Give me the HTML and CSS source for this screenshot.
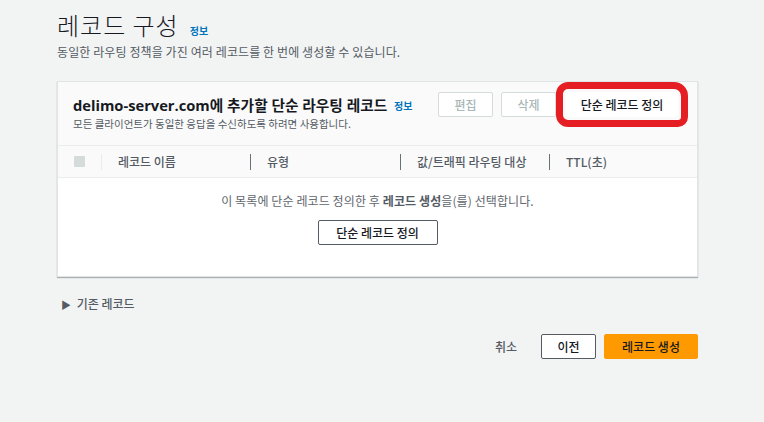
FILE: index.html
```html
<!DOCTYPE html>
<html>
<head>
	<meta charset="UTF-8">
	<title>레코드 구성</title>
	<link rel="stylesheet" href="styles.css">
</head>
<body>
	<div class="page">
		<div class="head">
			<h1 class="title">레코드 구성 <a class="info">정보</a></h1>
			<p class="desc">동일한 라우팅 정책을 가진 여러 레코드를 한 번에 생성할 수 있습니다.</p>
		</div>

		<div class="card">
			<div class="card-head">
				<div class="card-text">
					<h2 class="card-title">delimo-server.com에 추가할 단순 라우팅 레코드 <a class="info">정보</a></h2>
					<p class="card-desc">모든 클라이언트가 동일한 응답을 수신하도록 하려면 사용합니다.</p>
				</div>
				<div class="actions">
					<button class="btn off">편집</button>
					<button class="btn off">삭제</button>
					<span class="mark"><button class="btn">단순 레코드 정의</button></span>
				</div>
			</div>
			<div class="thead">
				<div class="cell chk"><span class="box"></span></div>
				<div class="cell c1">레코드 이름</div>
				<div class="cell c2">유형</div>
				<div class="cell c3">값/트래픽 라우팅 대상</div>
				<div class="cell c4">TTL(초)</div>
			</div>
			<div class="empty">
				<p>이 목록에 단순 레코드 정의한 후 <b>레코드 생성</b>을(를) 선택합니다.</p>
				<button class="btn dark">단순 레코드 정의</button>
			</div>
		</div>

		<div class="existing"><span class="tri">▶</span> 기존 레코드</div>

		<div class="footer">
			<button class="link">취소</button>
			<button class="btn dark">이전</button>
			<button class="btn primary">레코드 생성</button>
		</div>
	</div>
</body>
</html>
```

FILE: styles.css
```css
*{
	margin:0;
	padding:0;
	box-sizing:border-box;
}
body{
	background:#f2f3f3;
	font-family:"Open Sans","Noto Sans CJK KR",sans-serif;
	color:#16191f;
}
.page{
	width:641px;
	margin-left:57px;
	padding-top:10px;
}
.title{
	display:flex;
	align-items:baseline;
	height:30px;
	font-family:"Noto Sans CJK KR",sans-serif;
	font-weight:300;
	font-size:24px;
	line-height:30px;
	color:#16191f;
	letter-spacing:1px;
}
.info{
	font-family:"Noto Sans CJK KR",sans-serif;
	font-size:10px;
	font-weight:700;
	color:#0073bb;
	margin-left:11px;
	letter-spacing:0;
}
.desc{
	font-family:"Noto Sans CJK KR",sans-serif;
	font-size:12px;
	letter-spacing:0.1px;
	color:#545b64;
	margin-top:4px;
	line-height:16px;
}
.card{
	margin-top:21px;
	background:#fff;
	border:1px solid #e1e4e4;
	box-shadow:0 1px 1px rgba(0,28,36,.3);
}
.card-head{
	background:#fafafa;
	display:flex;
	justify-content:space-between;
	padding:10px 9px 0 15px;
	height:64px;
	border-bottom:1px solid #eaeded;
}
.card-title{
	font-family:"Open Sans","Noto Sans CJK KR",sans-serif;
	font-size:14.7px;
	font-weight:700;
	line-height:22px;
	margin-top:2px;
}
.card-title .info{
	margin-left:3px;
	vertical-align:1px;
}
.card-desc{
	font-family:"Noto Sans CJK KR",sans-serif;
	font-size:10.5px;
	color:#545b64;
	line-height:14px;
}
.actions{
	display:flex;
	gap:8px;
	align-items:flex-start;
}
.btn{
	font-family:"Noto Sans CJK KR",sans-serif;
	font-size:12px;
	font-weight:500;
	height:25px;
	padding:0 12px;
	background:#fff;
	border:1px solid #aab7b8;
	color:#545b64;
	border-radius:2px;
}
.btn.off{
	width:55px;
	border-color:#d5dbdb;
	color:#aab7b8;
}
.mark{
	display:block;
	margin-left:-8px;
	margin-top:-10px;
	padding:3px;
	border:7px solid #e41e23;
	border-radius:12px 14px 10px 12px;
}
.mark .btn{
	border-color:#fff;
	color:#16191f;
	width:112px;
	display:block;
}
.thead{
	background:#fafafa;
	height:32px;
	display:flex;
	align-items:center;
	border-bottom:1px solid #eaeded;
	font-family:"Noto Sans CJK KR",sans-serif;
	font-size:12px;
	font-weight:500;
	color:#545b64;
}
.cell{
	height:16px;
	line-height:16px;
	border-left:1px solid #687078;
	padding-left:16px;
}
.chk{
	border:0;
	padding-left:16px;
	width:44px;
	display:flex;
	align-items:center;
	border-right:1px solid #eaeded;
}
.box{
	display:block;
	width:11px;
	height:11px;
	background:#d5dbdb;
	border-radius:1px;
}
.c1{
	border:0;
	width:148px;
}
.c2{
	width:150px;
}
.c3{
	width:149px;
}
.c4{
	flex:1;
}
.empty{
	height:98px;
	text-align:center;
	padding-top:15px;
	font-family:"Noto Sans CJK KR",sans-serif;
	font-size:12px;
	letter-spacing:0.1px;
	line-height:16px;
	color:#5f666d;
}
.empty b{
	font-weight:700;
	color:#545b64;
}
.empty .btn{
	margin-top:11px;
	width:120px;
	letter-spacing:0;
}
.btn.dark{
	border-color:#545b64;
	color:#16191f;
}
.existing{
	margin-top:19px;
	margin-left:4px;
	font-family:"Noto Sans CJK KR",sans-serif;
	font-size:12px;
	font-weight:500;
	line-height:16px;
	color:#545b64;
}
.tri{
	font-size:10px;
	color:#545b64;
	margin-right:3px;
}
.footer{
	display:flex;
	justify-content:flex-end;
	align-items:center;
	gap:8px;
	margin-top:21px;
}
.link{
	font-family:"Noto Sans CJK KR",sans-serif;
	font-size:12px;
	font-weight:500;
	color:#545b64;
	background:none;
	border:0;
	margin-right:16px;
}
.footer .dark{
	width:55px;
}
.btn.primary{
	background:#ff9900;
	border-color:#ff9900;
	color:#16191f;
	width:94px;
}
```
